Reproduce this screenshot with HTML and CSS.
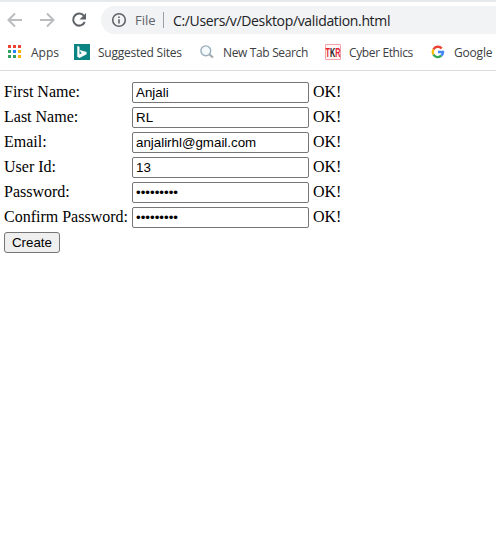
FILE: index.html
```html
<!DOCTYPE html>
<html lang="en">
<head>
<meta charset="utf-8">
<title>validation.html</title>
<link rel="stylesheet" href="styles.css">
</head>
<body>
<header class="browser">
  <div class="toolbar">
    <svg class="nav" width="16" height="16" viewBox="0 0 16 16"><path d="M15 8H2M8 1.5 1.5 8 8 14.5"/></svg>
    <svg class="nav" width="16" height="16" viewBox="0 0 16 16"><path d="M1 8h13M8 1.5 14.5 8 8 14.5"/></svg>
    <svg class="reload" width="16" height="16" viewBox="0 0 16 16"><path class="arc" d="M13 4A6 6 0 1 0 13.7 10"/><path class="tip" d="M15 1v6.5H8.5z"/></svg>
    <div class="address">
      <svg class="info" width="16" height="16" viewBox="0 0 16 16"><circle cx="8" cy="8" r="6.3"/><path d="M8 7.2v4.3M8 4.4v1.7"/></svg>
      <span class="scheme">File</span>
      <span class="divider"></span>
      <span class="url">C:/Users/v/Desktop/validation.html</span>
    </div>
  </div>
  <nav class="bookmarks">
    <span class="item apps">
      <svg width="16" height="16" viewBox="0 0 16 16"><path fill="#ea4335" d="M1 1h3v3H1zM6 1h3v3H6zM11 1h3v3h-3z"/><path fill="#34a060" d="M1 6h3v3H1zM1 11h3v3H1zM6 11h3v3H6z"/><path fill="#2684fc" d="M6 6h3v3H6z"/><path fill="#fbb00b" d="M11 6h3v3h-3zM11 11h3v3h-3z"/></svg>
      <span>Apps</span>
    </span>
    <span class="item suggested">
      <svg width="16" height="16" viewBox="0 0 16 16"><path fill="#0c8484" d="M0 0h16v16H0z"/><path fill="#fff" d="M3.3 2l2.2.8v7.6l2.4-1.4-1.2-.6-.9-2.3L12.6 8v2.3L5.5 14l-2.2-1.3z"/></svg>
      <span>Suggested Sites</span>
    </span>
    <span class="item search">
      <svg width="16" height="16" viewBox="0 0 16 16"><path d="M10.5 10.5 14 13.5" stroke="#a4a9ad" stroke-width="2.2"/><circle cx="6.8" cy="6.8" r="4.9" fill="#f5fafd" stroke="#9aaebb" stroke-width="1.4"/></svg>
      <span>New Tab Search</span>
    </span>
    <span class="item ethics">
      <svg width="16" height="16" viewBox="0 0 16 16"><path fill="#fff5f5" stroke="#f4a4a8" d="M.5.5h15v15H.5z"/><text class="tkr" x="0.5" y="12.5" textLength="15" lengthAdjust="spacingAndGlyphs"><tspan fill="#e32632">T</tspan><tspan fill="#222">K</tspan><tspan fill="#e32632">R</tspan></text></svg>
      <span>Cyber Ethics</span>
    </span>
    <span class="item google">
      <svg width="16" height="16" viewBox="0 0 16 16"><g fill="none" stroke-width="2.4"><path stroke="#ea4335" d="M3.4 5.5A5 5 0 0 1 11.7 4.6"/><path stroke="#fbbc05" d="M3.4 5.5a5 5 0 0 0 0 5"/><path stroke="#34a853" d="M3.4 10.5a5 5 0 0 0 7.9 1.2"/><path stroke="#4285f4" d="M8 8h5a5 5 0 0 1-1.7 3.7"/></g></svg>
      <span>Google</span>
    </span>
  </nav>
</header>
<form class="form">
  <label for="first">First Name:</label><input id="first" type="text" value="Anjali"><span>OK!</span>
  <label for="last">Last Name:</label><input id="last" type="text" value="RL"><span>OK!</span>
  <label for="email">Email:</label><input id="email" type="text" value="anjalirhl@gmail.com"><span>OK!</span>
  <label for="user">User Id:</label><input id="user" type="text" value="13"><span>OK!</span>
  <label for="pass">Password:</label><input id="pass" type="password" value="abcdefghi"><span>OK!</span>
  <label for="confirm">Confirm Password:</label><input id="confirm" type="password" value="abcdefghi"><span>OK!</span>
  <button type="button">Create</button>
</form>
</body>
</html>
```
FILE: styles.css
```css
* { box-sizing: border-box; }
body { margin: 0; background: #fff; color: #000; overflow: hidden; }
svg { display: block; flex: none; }
.browser {
  height: 71px;
  border-top: 2px solid #e7eaed;
  border-bottom: 1px solid #d9dbdd;
  font-family: "Open Sans", "Noto Sans", sans-serif;
  white-space: nowrap;
}
.toolbar { display: flex; align-items: center; height: 32px; padding: 4px 0 0 7px; gap: 16px; }
.nav path { fill: none; stroke: #babcbe; stroke-width: 2; }
.reload .arc { fill: none; stroke: #5f6368; stroke-width: 2; }
.reload .tip { fill: #5f6368; }
.address {
  display: flex;
  align-items: center;
  flex: 1;
  height: 28px;
  margin-left: -2px;
  padding-left: 10px;
  background: #f1f3f4;
  border-radius: 14px 0 0 14px;
  font-size: 14px;
}
.info { fill: none; stroke: #5f6368; stroke-width: 1.6; }
.scheme { width: 28px; margin-left: 8px; color: #5f6368; font-size: 13px; }
.divider { width: 1px; height: 16px; background: #9aa0a6; }
.url { margin-left: 9px; color: #202124; letter-spacing: -0.34px; }
.bookmarks { display: flex; align-items: center; height: 36px; padding-left: 7px; font-size: 12px; color: #3c4043; }
.item { display: flex; flex: none; align-items: center; gap: 8px; }
.apps { width: 67px; }
.suggested { width: 125px; letter-spacing: -0.23px; }
.search { width: 126px; letter-spacing: -0.35px; }
.ethics { width: 105px; letter-spacing: -0.38px; }
.google { letter-spacing: -0.2px; }
.tkr { font: bold 12px "Liberation Sans", sans-serif; letter-spacing: 0; }
.form {
  display: grid;
  grid-template-columns: 124px 177px auto;
  grid-auto-rows: 21px;
  gap: 4px;
  align-items: center;
  justify-content: start;
  padding: 11px 4px;
  font: 16px/18px "Liberation Serif", serif;
  white-space: nowrap;
}
.form label, .form span { padding-bottom: 2px; }
.form input {
  width: 177px;
  height: 21px;
  padding: 1px 3px;
  border: 1px solid #767676;
  border-radius: 2px;
  font: 13.333px "Liberation Sans", sans-serif;
}
.form button {
  width: 56px;
  height: 21px;
  padding: 0;
  border: 1px solid #767676;
  border-radius: 3px;
  background: #efefef;
  color: #000;
  font: 13.333px "Liberation Sans", sans-serif;
}
```
